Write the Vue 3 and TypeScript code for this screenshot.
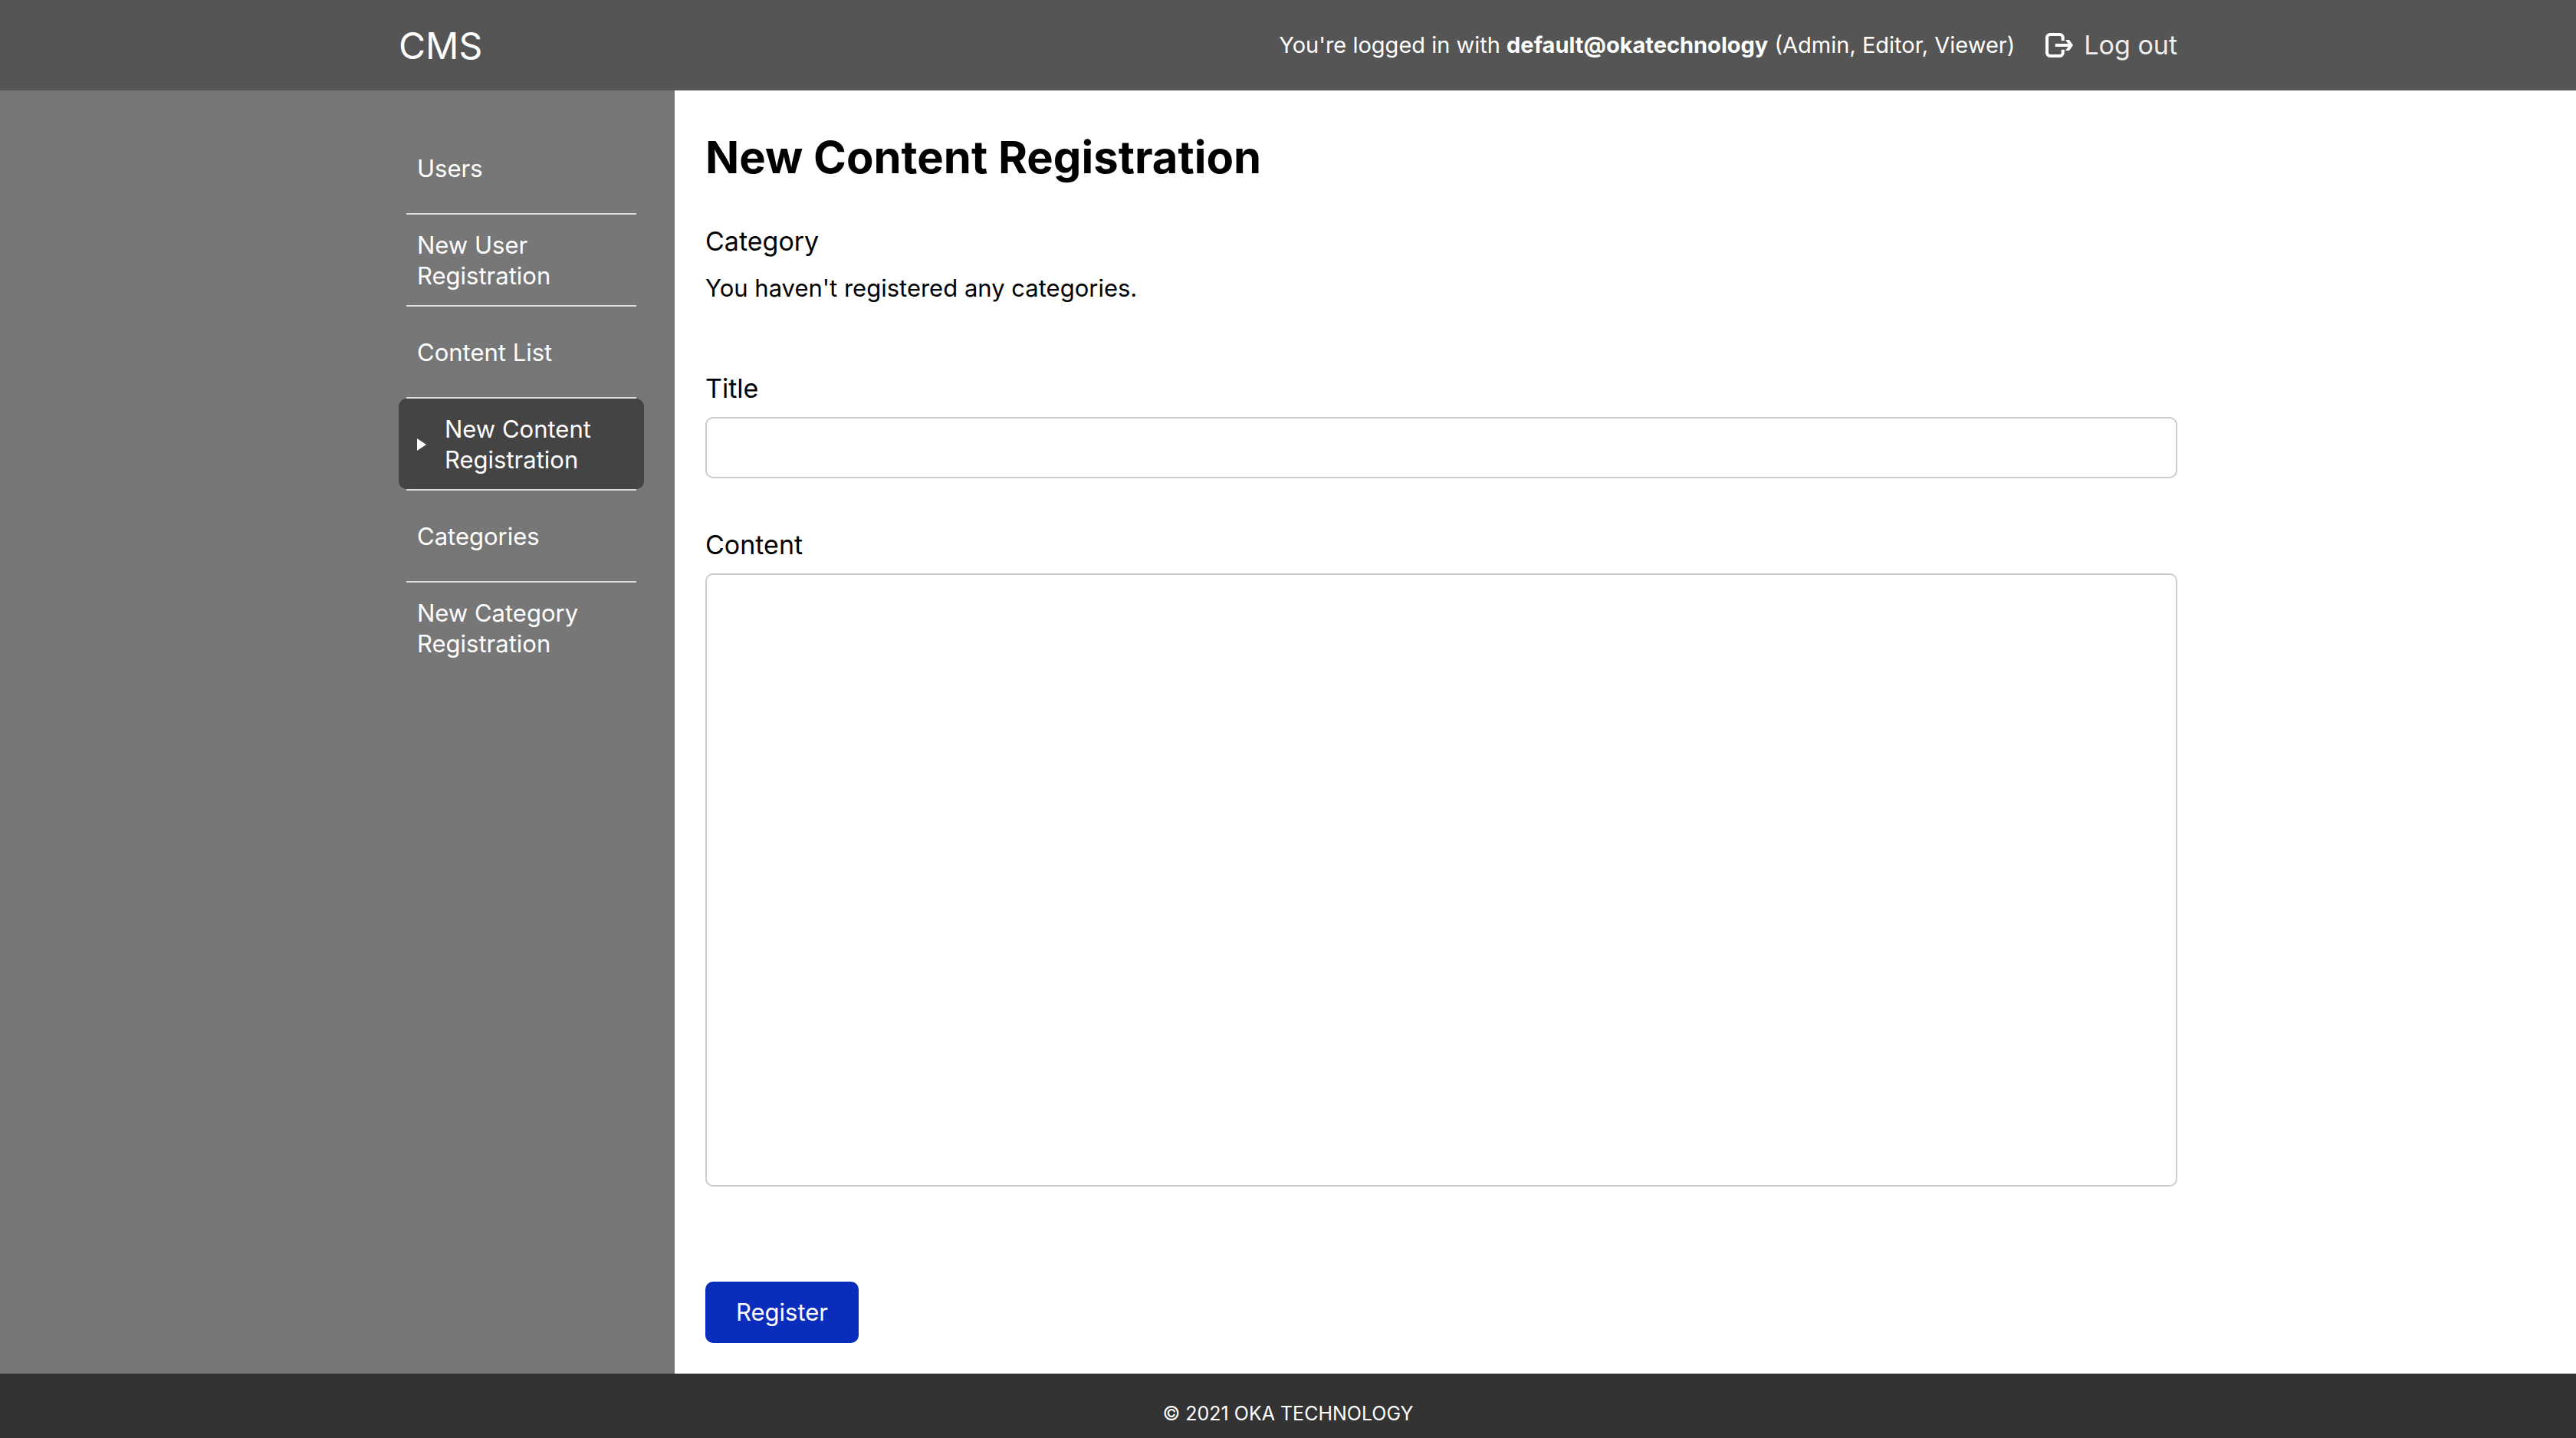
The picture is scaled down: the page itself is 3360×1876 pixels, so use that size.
<script setup lang="ts">
import { ref } from 'vue'

interface NavItem {
  label: string
  href: string
  active?: boolean
}

const navItems: NavItem[] = [
  { label: 'Users', href: '#users' },
  { label: 'New User Registration', href: '#users-new' },
  { label: 'Content List', href: '#contents' },
  { label: 'New Content Registration', href: '#contents-new', active: true },
  { label: 'Categories', href: '#categories' },
  { label: 'New Category Registration', href: '#categories-new' },
]

const account = { name: 'default@okatechnology', roles: ['Admin', 'Editor', 'Viewer'] }

const title = ref('')
const content = ref('')
</script>

<template>
  <div class="page">
    <header class="header">
      <div class="header-inner">
        <a class="brand" href="#home">CMS</a>
        <div class="session">
          <p class="status">
            You're logged in with <strong>{{ account.name }}</strong> ({{ account.roles.join(', ') }})
          </p>
          <a class="logout" href="#logout">
            <svg class="logout-icon" viewBox="0 0 36 32" aria-hidden="true">
              <path
                d="M22.7 10.3V6a4 4 0 0 0-4-4H6a4 4 0 0 0-4 4v20a4 4 0 0 0 4 4h12.7a4 4 0 0 0 4-4v-4.3M12.7 16H32"
                fill="none"
                stroke="currentColor"
                stroke-width="4"
              />
              <path d="M26 9h5l5 7-5 7h-5l3.5-5v-4z" fill="currentColor" />
            </svg>
            <span>Log out</span>
          </a>
        </div>
      </div>
    </header>

    <div class="body">
      <aside class="sidebar">
        <nav aria-label="Main">
          <ul class="nav-list">
            <li v-for="item in navItems" :key="item.href" class="nav-item">
              <a
                class="nav-link"
                :class="{ active: item.active }"
                :href="item.href"
                :aria-current="item.active ? 'page' : undefined"
              >
                <span v-if="item.active" class="marker" aria-hidden="true"></span>
                <span>{{ item.label }}</span>
              </a>
            </li>
          </ul>
        </nav>
      </aside>

      <main class="main">
        <h1>New Content Registration</h1>
        <form @submit.prevent>
          <section class="field category">
            <h2 class="label">Category</h2>
            <p class="message">You haven't registered any categories.</p>
          </section>
          <div class="field">
            <label class="label" for="title">Title</label>
            <input id="title" v-model="title" class="control" type="text" />
          </div>
          <div class="field">
            <label class="label" for="content">Content</label>
            <textarea id="content" v-model="content" class="control area"></textarea>
          </div>
          <button class="submit" type="submit">Register</button>
        </form>
      </main>
    </div>

    <footer class="footer">
      <small>© 2021 OKA TECHNOLOGY</small>
    </footer>
  </div>
</template>

<style>
body {
  margin: 0;
}
</style>

<style scoped>
* {
  box-sizing: border-box;
}

.page {
  display: flex;
  flex-direction: column;
  min-height: 100vh;
  background: #fff;
  color: #000;
  font-family: Inter, 'Liberation Sans', sans-serif;
  font-size: 31px;
  line-height: 48px;
}

a {
  color: inherit;
  text-decoration: none;
}

h1,
h2,
p,
ul {
  margin: 0;
  padding: 0;
}

.header {
  background: #555;
  color: #fff;
}

.header-inner {
  display: flex;
  align-items: center;
  justify-content: space-between;
  max-width: 2320px;
  min-height: 118px;
  margin: 0 auto;
}

.brand {
  padding-top: 2px;
  font-size: 48px;
  line-height: 60px;
}

.session {
  display: flex;
  align-items: center;
  gap: 40px;
}

.status {
  font-size: 29px;
}

.logout {
  display: flex;
  align-items: center;
  gap: 14px;
  color: #eee;
  font-size: 34px;
}

.logout-icon {
  width: 36px;
  height: 32px;
  color: #fff;
}

.body {
  display: grid;
  flex: 1;
  grid-template-columns: minmax(0, 1fr) 360px minmax(0, 1960px) minmax(0, 1fr);
}

.sidebar {
  grid-column: 1 / 3;
  display: flex;
  justify-content: flex-end;
  padding: 42px 40px 40px 0;
  background: #777;
  color: #fff;
}

.nav-list {
  width: 320px;
  list-style: none;
}

.nav-item::after {
  content: '';
  display: block;
  height: 2px;
  margin: 0 10px;
  background: #ddd;
}

.nav-item:last-child::after {
  display: none;
}

.nav-link {
  display: flex;
  align-items: center;
  min-height: 118px;
  padding: 2px 24px 0;
  border-radius: 10px;
  line-height: 40px;
}

.nav-link.active {
  gap: 24px;
  background: #444;
}

.marker {
  flex: none;
  border: solid transparent;
  border-width: 8px 0 8px 12px;
  border-left-color: #fff;
}

.main {
  grid-column: 3;
  padding: 42px 0 40px 40px;
}

h1 {
  margin-bottom: 38px;
  font-size: 58px;
  font-weight: 700;
  line-height: 90px;
}

.field {
  display: flex;
  flex-direction: column;
  gap: 10px;
  margin-bottom: 60px;
}

.field.category {
  margin-bottom: 80px;
}

.label {
  font-size: 34px;
  font-weight: 400;
  line-height: 54px;
}

.control {
  width: 100%;
  height: 80px;
  padding: 10px 20px;
  border: 2px solid #ccc;
  border-radius: 10px;
  outline: none;
  background: #fff;
  color: inherit;
  font: inherit;
}

.control.area {
  height: 800px;
  resize: none;
}

.submit {
  display: block;
  min-width: 200px;
  height: 80px;
  margin-top: 124px;
  padding: 0 40px;
  border: 0;
  border-radius: 10px;
  background: #0a2dbb;
  color: #fff;
  font: inherit;
}

.footer {
  padding: 32px 0 12px;
  background: #333;
  color: #fff;
  text-align: center;
  line-height: 40px;
}

.footer small {
  display: block;
  font-size: 25px;
}
</style>
